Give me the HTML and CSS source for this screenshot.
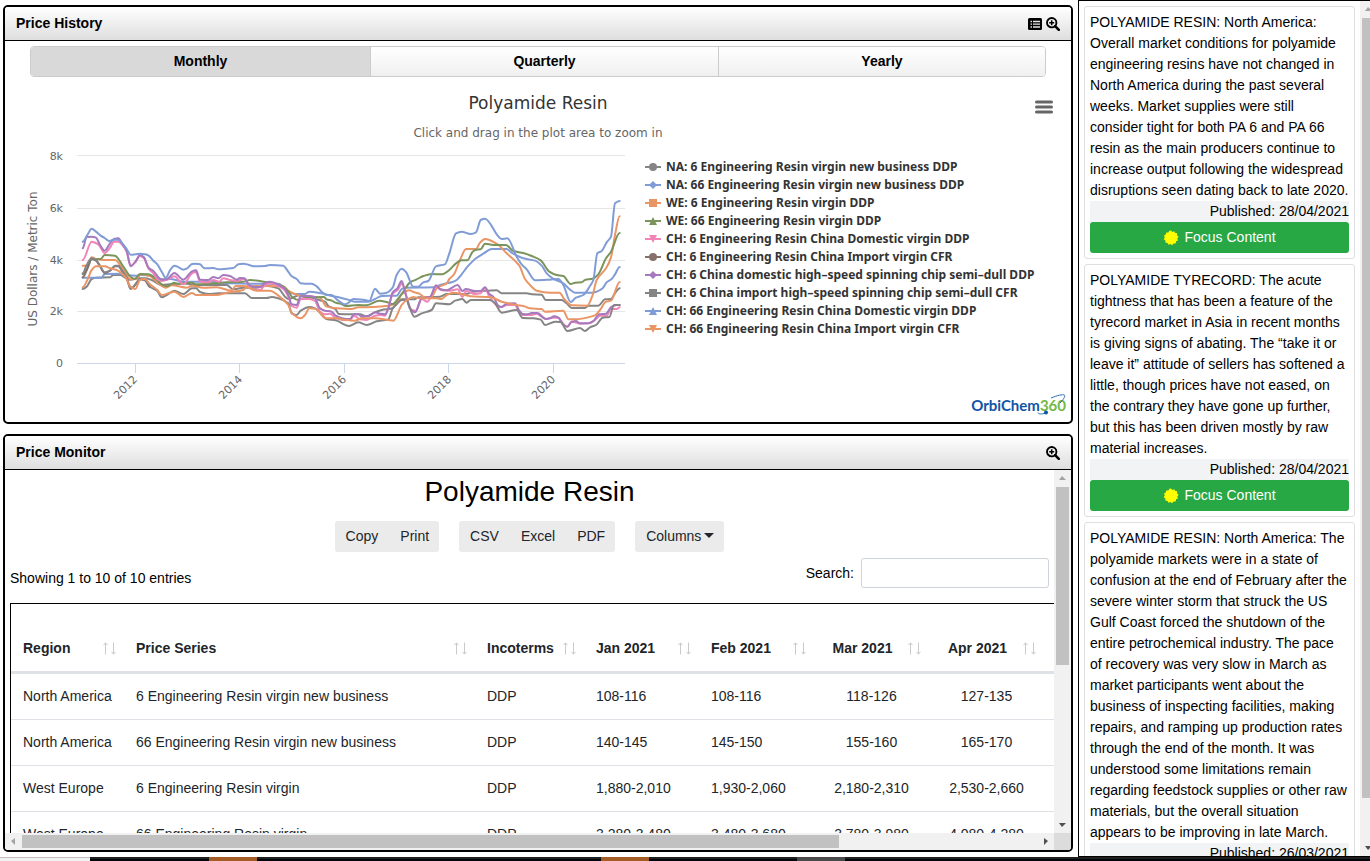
FILE: index.html
```html
<!DOCTYPE html>
<html lang="en">
<head>
<meta charset="utf-8">
<title>Polyamide Resin prices</title>
<link rel="stylesheet" href="styles.css">
</head>
<body>
<svg class="defs" aria-hidden="true">
  <symbol id="zoom-in" viewBox="0 0 14 14"><circle cx="5.7" cy="5.7" r="4.7" fill="none" stroke="#000" stroke-width="1.9"/><path d="M9.1 9.1 12.800 12.800" stroke="#000" stroke-width="2.6" stroke-linecap="round"/><path d="M3.2 5.7h5M5.7 3.2v5" stroke="#000" stroke-width="1.5"/></symbol>
  <symbol id="sort" viewBox="0 0 14 13"><path d="M2.5 12.5V1M.5 3.2 2.5.8l2 2.4M10.5.5V12M8.5 9.8l2 2.4 2-2.4" fill="none" stroke="#c9cacb" stroke-width="1"/></symbol>
  <symbol id="sun" viewBox="-8 -8 16 16"><path fill="#ff0" d="M0-7.6 1.5-5.9 3.3-6.8 4.2-4.9 6.2-4.7 6.1-2.6 7.6-1.3 6.3.4 7 2.4 5.1 3.3 4.6 5.4 2.5 5.4 1.1 7.2-.5 5.9-2.5 6.8-3.5 4.9-5.6 4.5-5.6 2.4-7.3 1.2-6.2-.6-7-2.5-5.2-3.5-4.8-5.6-2.6-5.5-1.6-7.2z"/></symbol>
</svg>
<div class="workspace">
  <main class="panels">
    <section class="panel">
      <header class="panel-head">
        <h2>Price History</h2>
        <div class="panel-tools">
          <button class="icon-button" aria-label="List view"><svg width="14" height="12" viewBox="0 0 14 12"><rect width="14" height="12" rx="1.5"/><path d="M2.5 3.5h1.500M5 3.500h7M2.500 6.200h1.500M5 6.200h7M2.500 9h1.500M5 9h7" stroke="#e6e6e6" stroke-width="1.300"/></svg></button>
          <button class="icon-button" aria-label="Zoom chart"><svg width="14" height="14"><use href="#zoom-in"/></svg></button>
        </div>
      </header>
      <div class="periods">
        <button class="period active">Monthly</button>
        <button class="period">Quarterly</button>
        <button class="period">Yearly</button>
      </div>
      <div class="chart">
        <button class="icon-button chart-menu" aria-label="Chart menu"><svg width="18" height="14" viewBox="0 0 18 14"><path d="M1.500 2h15M1.500 7h15M1.500 12h15" stroke="#666" stroke-width="3" stroke-linecap="round"/></svg></button>
        <h3 class="chart-title">Polyamide Resin</h3>
        <p class="chart-subtitle">Click and drag in the plot area to zoom in</p>
        <div class="chart-body">
          <svg class="plot" viewBox="0 0 620 271">
            <path class="grid" d="M57 10.500H605M57 63.500H605M57 115.500H605M57 166.500H605"/>
            <path class="axis" d="M57 218.500H605M115.500 218v10M219.500 218v10M324.500 218v10M428.500 218v10M533.500 218v10"/>
            <g class="tick" text-anchor="end">
              <text x="43" y="15">8k</text><text x="43" y="67">6k</text><text x="43" y="119">4k</text><text x="43" y="170">2k</text><text x="43" y="222">0</text>
              <text transform="translate(118 235) rotate(-45)">2012</text>
              <text transform="translate(223 235) rotate(-45)">2014</text>
              <text transform="translate(327 235) rotate(-45)">2016</text>
              <text transform="translate(432 235) rotate(-45)">2018</text>
              <text transform="translate(536 235) rotate(-45)">2020</text>
            </g>
            <text class="axis-title" text-anchor="middle" transform="translate(17 114) rotate(-90)">US Dollars / Metric Ton</text>
            <g id="series" transform="translate(50 0) scale(.33333)"></g>
          </svg>
          <div class="chart-side">
            <ul class="legend" id="legend"></ul>
            <div class="logo"><span>OrbiChem</span><span class="logo-num">360</span>
              <svg class="logo-orbit" width="34" height="22" viewBox="0 0 34 22"><path d="M19 4C25 1.500 31 0 32.500 1.200 33.500 2.500 31 6 28 9M6 18.500c0 2 5 2 9-.2" fill="none" stroke="#2a6db0"/><circle cx="14" cy="18.500" r="2" fill="#1054a5"/></svg>
            </div>
          </div>
        </div>
      </div>
    </section>

    <section class="panel monitor">
      <header class="panel-head">
        <h2>Price Monitor</h2>
        <div class="panel-tools"><button class="icon-button" aria-label="Zoom table"><svg width="14" height="14"><use href="#zoom-in"/></svg></button></div>
      </header>
      <div class="scroller">
        <div class="view">
          <h1 class="table-title">Polyamide Resin</h1>
          <div class="toolbar">
            <div class="group"><button>Copy</button><button>Print</button></div>
            <div class="group"><button>CSV</button><button>Excel</button><button>PDF</button></div>
            <div class="group"><button>Columns<i class="caret"></i></button></div>
          </div>
          <div class="filter">
            <span class="info">Showing 1 to 10 of 10 entries</span>
            <label class="search">Search: <input type="search"></label>
          </div>
          <table class="prices">
            <colgroup><col class="w-region"><col class="w-series"><col class="w-terms"><col class="w-month"><col class="w-month"><col class="w-month"><col class="w-month"><col></colgroup>
            <thead><tr>
              <th>Region<svg class="sort"><use href="#sort"/></svg></th>
              <th>Price Series<svg class="sort"><use href="#sort"/></svg></th>
              <th>Incoterms<svg class="sort"><use href="#sort"/></svg></th>
              <th>Jan 2021<svg class="sort"><use href="#sort"/></svg></th>
              <th>Feb 2021<svg class="sort"><use href="#sort"/></svg></th>
              <th class="mid">Mar 2021<svg class="sort"><use href="#sort"/></svg></th>
              <th class="mid">Apr 2021<svg class="sort"><use href="#sort"/></svg></th>
              <th></th>
            </tr></thead>
            <tbody>
              <tr><td>North America</td><td>6 Engineering Resin virgin new business</td><td>DDP</td><td>108-116</td><td>108-116</td><td class="mid">118-126</td><td class="mid">127-135</td><td></td></tr>
              <tr><td>North America</td><td>66 Engineering Resin virgin new business</td><td>DDP</td><td>140-145</td><td>145-150</td><td class="mid">155-160</td><td class="mid">165-170</td><td></td></tr>
              <tr><td>West Europe</td><td>6 Engineering Resin virgin</td><td>DDP</td><td>1,880-2,010</td><td>1,930-2,060</td><td class="mid">2,180-2,310</td><td class="mid">2,530-2,660</td><td></td></tr>
              <tr><td>West Europe</td><td>66 Engineering Resin virgin</td><td>DDP</td><td>3,280-3,480</td><td>3,480-3,680</td><td class="mid">3,780-3,980</td><td class="mid">4,080-4,280</td><td></td></tr>
            </tbody>
          </table>
        </div>
        <div class="bar-v"><i class="arrow up"></i><div class="track-v"><div class="thumb thumb-rows"></div></div><i class="arrow down"></i></div>
        <div class="bar-h"><i class="arrow left"></i><div class="track-h"><div class="thumb thumb-cols"></div></div><i class="arrow right"></i></div>
        <div class="corner"></div>
      </div>
    </section>
  </main>

  <aside class="news">
    <div class="cards">
      <article class="card">
        <p>POLYAMIDE RESIN: North America: Overall market conditions for polyamide engineering resins have not changed in North America during the past several weeks. Market supplies were still consider tight for both PA 6 and PA 66 resin as the main producers continue to increase output following the widespread disruptions seen dating back to late 2020.</p>
        <div class="published">Published: 28/04/2021</div>
        <button class="focus"><svg width="16" height="16"><use href="#sun"/></svg>Focus Content</button>
      </article>
      <article class="card">
        <p>POLYAMIDE TYRECORD: The acute tightness that has been a feature of the tyrecord market in Asia in recent months is giving signs of abating. The “take it or leave it” attitude of sellers has softened a little, though prices have not eased, on the contrary they have gone up further, but this has been driven mostly by raw material increases.</p>
        <div class="published">Published: 28/04/2021</div>
        <button class="focus"><svg width="16" height="16"><use href="#sun"/></svg>Focus Content</button>
      </article>
      <article class="card">
        <p>POLYAMIDE RESIN: North America: The polyamide markets were in a state of confusion at the end of February after the severe winter storm that struck the US Gulf Coast forced the shutdown of the entire petrochemical industry. The pace of recovery was very slow in March as market participants went about the business of inspecting facilities, making repairs, and ramping up production rates through the end of the month. It was understood some limitations remain regarding feedstock supplies or other raw materials, but the overall situation appears to be improving in late March.</p>
        <div class="published">Published: 26/03/2021</div>
        <button class="focus"><svg width="16" height="16"><use href="#sun"/></svg>Focus Content</button>
      </article>
    </div>
    <div class="bar-v"><i class="arrow up"></i><div class="track-v"><div class="thumb thumb-news"></div></div><i class="arrow down"></i></div>
  </aside>
</div>
<footer class="taskbar"><i class="start"></i><i class="task first"></i><i class="task second"></i><i class="task muted"></i></footer>
<script src="chart.js"></script>
</body>
</html>
```
FILE: styles.css
```css
* { box-sizing: border-box; }
html, body { height: 100%; margin: 0; }
body {
  display: flex;
  flex-direction: column;
  overflow: hidden;
  background: #fff;
  color: #000;
  font: 14px/21px "Liberation Sans", Arial, sans-serif;
}
h1, h2, h3, p, ul { margin: 0; padding: 0; font-weight: normal; }
button { font: inherit; color: inherit; border: 0; background: none; padding: 0; }
svg { display: block; }
.defs { position: absolute; width: 0; height: 0; }

.workspace { flex: 1; min-height: 0; display: grid; grid-template-columns: minmax(0, 1fr) 292px; }
.panels { display: flex; flex-direction: column; gap: 10px; min-height: 0; padding: 5px 5px 5px 3px; }
.panel { border: 2px solid #000; border-radius: 5px; overflow: hidden; }
.panel-head {
  display: flex;
  justify-content: space-between;
  align-items: center;
  height: 34px;
  padding: 0 11px;
  border-bottom: 1px solid #000;
  background: linear-gradient(#fff, #dedede);
}
.panel-head h2 { font-size: 14px; font-weight: bold; }
.panel-tools { display: flex; align-items: center; gap: 4px; }

.periods {
  display: grid;
  grid-template-columns: 339fr 348fr 327fr;
  margin: 5px 25px 0;
  border: 1px solid #ccc;
  border-radius: 4px;
  overflow: hidden;
}
.period { height: 29px; font-weight: bold; background: linear-gradient(#fff, #f0f0f0); border-left: 1px solid #ccc; }
.period:first-child { border-left: 0; }
.period.active { background: #d9d9d9; }

.chart { position: relative; padding: 14px 5px 6px 15px; font-family: "DejaVu Sans", sans-serif; }
.chart-menu { position: absolute; top: 23px; right: 18px; }
.chart-title, .chart-subtitle { padding-right: 10px; text-align: center; }
.chart-title { font-size: 17px; line-height: 24px; color: #333; }
.chart-subtitle { margin-top: 8px; font-size: 12px; line-height: 20px; color: #666; }
.chart-body { display: grid; grid-template-columns: 620fr 421fr; gap: 5px; margin-top: 2px; }
.plot { width: 100%; }
.grid { stroke: #e6e6e6; fill: none; }
.axis { stroke: #ccd6eb; fill: none; }
.tick { font-size: 11px; fill: #666; }
.axis-title { font-size: 12px; fill: #666; }
.line { fill: none; stroke-width: 6; stroke-linejoin: round; stroke-linecap: round; }
.chart-side { display: flex; flex-direction: column; justify-content: space-between; padding-top: 13px; }
.legend { list-style: none; font: bold 12px/18px "Noto Sans", sans-serif; color: #333; white-space: nowrap; }
.legend li { display: flex; align-items: center; gap: 5px; }
.logo { position: relative; align-self: flex-end; font: bold 15px/22px Lato, sans-serif; color: #1054a5; }
.logo-num { color: #74b843; }
.logo-orbit { position: absolute; right: 0; top: 0; }

.monitor { flex: 1; min-height: 0; display: flex; flex-direction: column; }
.monitor .panel-head { flex: none; }
.scroller { flex: 1; min-height: 0; display: grid; grid-template: minmax(0, 1fr) 17px / minmax(0, 1fr) 17px; }
.view { overflow: hidden; padding: 5px 0 0 5px; }
.table-title { margin-right: 5px; text-align: center; font-size: 28px; line-height: 34px; }
.toolbar { display: flex; justify-content: center; gap: 20px; margin: 12px 5px 0 0; }
.group { display: flex; border-radius: 3px; background: #ebebeb; color: #212529; }
.group button { height: 31px; padding: 0 11px; }
.group button:last-child { padding-right: 10px; }
.caret { display: inline-block; margin-left: 3px; border: 5px solid transparent; border-top-color: #212529; border-bottom: 0; vertical-align: 3px; }
.filter { display: flex; justify-content: space-between; margin: 5px 5px 14px 0; }
.info { padding-top: 11px; }
.search { display: flex; align-items: center; gap: 7px; }
.search input { width: 188px; height: 30px; border: 1px solid #ced4da; border-radius: 3px; }

.prices { table-layout: fixed; width: 100%; border-collapse: separate; border-spacing: 0; border: solid #000; border-width: 1px 0 0 1px; color: #212529; }
.w-region { width: 113px; }
.w-series { width: 351px; }
.w-terms { width: 109px; }
.w-month { width: 115px; }
.prices th { position: relative; height: 70px; padding: 21px 30px 0 12px; text-align: left; border-bottom: 3px solid #dee2e6; white-space: nowrap; }
.prices td { height: 46px; padding: 0 12px; border-bottom: 1px solid #dee2e6; white-space: nowrap; }
.prices th:last-child, .prices td:last-child { padding: 0; }
.prices th.mid, .prices td.mid { text-align: center; }
.sort { position: absolute; right: 7px; bottom: 16px; width: 14px; height: 13px; }

.bar-v, .bar-h { display: flex; background: #f1f1f1; }
.bar-v { flex-direction: column; }
.track-v, .track-h { flex: 1; min-width: 0; min-height: 0; }
.track-v { padding: 0 2px; }
.track-h { padding: 2px 0; }
.thumb { background: #c1c1c1; }
.thumb-rows { height: 54%; }
.thumb-news { height: 95%; }
.thumb-cols { width: 80.5%; height: 100%; }
.corner { background: #dcdcdc; }
.arrow { flex: none; width: 17px; height: 17px; background: #505050; }
.up { clip-path: polygon(8px 6px, 12px 10px, 5px 10px); background: #a3a3a3; }
.down { clip-path: polygon(5px 7px, 12px 7px, 8px 11px); }
.left { clip-path: polygon(10px 5px, 10px 12px, 6px 8px); background: #a3a3a3; }
.right { clip-path: polygon(7px 5px, 7px 12px, 11px 8px); }

.news { display: flex; justify-content: space-between; min-height: 0; border: solid #000; border-width: 1px 0 1px 1px; overflow: hidden; }
.news .bar-v { flex: none; width: 10px; overflow: hidden; }
.news .track-v { padding-right: 0; }
.cards { flex: none; display: flex; flex-direction: column; gap: 5px; width: 281px; padding: 5px; overflow: hidden; }
.card { flex: none; padding: 5px; border: 1px solid #dfdfdf; border-radius: 3px; }
.published { text-align: right; background: #f1f3f5; }
.focus { display: flex; justify-content: center; align-items: center; gap: 5px; width: 100%; height: 31px; border-radius: 3px; background: #28a745; color: #fff; }

.taskbar { display: grid; grid-template-columns: 90fr 119fr 48fr 344fr 48fr 148fr 48fr 525fr; height: 4px; background: linear-gradient(#1c211d 50%, #03040c 50%); }
.start { grid-column: 1; background: #f2f2f2; border-top: 1px solid #c0c0c0; }
.task { background: #a55d25; }
.first { grid-column: 3; }
.second { grid-column: 5; }
.muted { grid-column: 7; background: #4a4a4a; }
```
FILE: chart.js
```js
const BLUE = '#809cd6', GRAY = '#858585', ORANGE = '#ea9565', GREEN = '#7a945c',
  PINK = '#f285b8', BROWN = '#85706a', PURPLE = '#a479bd';

const series = [
  { name: 'NA: 6 Engineering Resin virgin new business DDP', color: GRAY, mark: 'circle', data: '38,432 50,425 65,402 78,398 120,397 130,390 152,390 165,398 182,404 200,400 225,400 245,405 275,420 300,418 340,415 378,420 470,420 490,433 520,428 560,428 590,422 625,430 645,455 655,462 690,450 750,466 765,470 775,483 797,493 806,507 840,508 870,508 890,514 915,502 935,495 968,490 980,472 995,463 1032,463 1045,457 1110,455 1130,447 1188,447 1210,440 1248,437 1280,436 1295,445 1370,445 1385,448 1415,449 1427,465 1475,465 1490,475 1505,489 1545,489 1555,482 1585,482 1605,463 1623,462 1635,445 1649,430' },
  { name: 'NA: 66 Engineering Resin virgin new business DDP', color: BLUE, mark: 'diamond', data: '38,398 95,398 104,387 150,386 165,390 200,392 212,390 245,392 275,403 300,402 340,410 430,410 470,415 545,416 625,416 640,425 660,443 675,447 705,447 718,440 755,445 785,453 812,458 840,466 854,470 895,470 915,462 935,453 980,452 995,432 1005,428 1095,427 1110,420 1125,416 1145,412 1160,405 1175,388 1190,368 1218,340 1240,326 1265,312 1310,312 1325,323 1360,340 1395,347 1415,362 1430,385 1448,400 1480,415 1500,434 1515,443 1565,443 1580,440 1598,430 1610,412 1625,402 1635,388 1649,366' },
  { name: 'WE: 6 Engineering Resin virgin DDP', color: ORANGE, mark: 'square', data: '38,362 52,362 65,337 78,342 104,345 135,345 160,375 182,403 200,402 212,388 240,393 262,412 288,428 305,421 352,428 366,422 400,428 440,427 485,437 497,423 640,424 655,437 690,452 750,458 770,485 800,490 845,492 865,487 910,486 955,482 980,472 995,448 1018,436 1030,441 1048,446 1065,457 1085,455 1102,427 1115,422 1130,415 1138,402 1152,388 1170,345 1188,312 1218,312 1230,293 1245,282 1280,296 1310,325 1348,362 1365,402 1385,425 1400,437 1440,443 1468,443 1485,465 1505,481 1552,482 1568,450 1580,405 1608,370 1623,337 1635,270 1649,214' },
  { name: 'WE: 66 Engineering Resin virgin DDP', color: GREEN, mark: 'up', data: '38,388 52,370 65,343 92,342 104,330 135,332 160,365 182,395 195,402 210,387 235,388 260,404 275,418 290,424 313,413 325,417 366,413 378,418 430,415 470,412 520,410 540,405 590,412 640,425 655,440 668,458 685,465 700,460 762,456 770,463 785,467 800,474 812,476 828,483 865,480 890,481 928,467 952,472 968,477 985,460 1000,440 1020,412 1040,403 1060,393 1085,387 1115,388 1138,375 1158,355 1175,346 1192,346 1208,320 1218,314 1232,313 1245,296 1270,300 1308,300 1330,318 1360,324 1385,333 1412,346 1438,380 1460,390 1480,393 1502,417 1515,413 1535,412 1545,405 1568,401 1585,388 1608,340 1623,320 1649,264' },
  { name: 'CH: 6 Engineering Resin China Domestic virgin DDP', color: PINK, mark: 'down', data: '38,345 65,290 85,298 104,324 120,308 132,290 145,290 157,300 170,320 182,362 196,352 210,333 222,340 235,370 250,385 262,403 275,408 290,405 313,394 340,418 366,385 378,381 390,411 415,412 430,405 448,410 460,400 480,405 500,408 523,402 537,420 550,434 572,434 585,420 600,415 640,432 655,455 665,483 680,488 692,462 718,462 735,468 750,500 765,508 780,506 797,518 820,525 840,525 852,512 870,523 890,525 915,512 930,510 945,512 968,447 985,432 995,415 1008,450 1025,495 1038,497 1055,462 1072,470 1085,450 1098,425 1115,436 1140,437 1163,433 1177,456 1188,438 1215,447 1232,445 1245,430 1258,455 1290,487 1312,480 1335,480 1345,495 1358,510 1385,510 1400,506 1415,515 1430,522 1445,518 1465,518 1480,537 1492,545 1505,530 1530,536 1558,535 1575,525 1590,512 1610,512 1623,492 1640,492 1649,487' },
  { name: 'CH: 6 Engineering Resin China Import virgin CFR', color: BROWN, mark: 'circle', data: '38,397 50,376 65,341 78,347 90,364 104,384 120,377 135,364 145,364 157,380 170,400 182,431 195,420 210,403 225,406 240,426' },
  { name: 'CH: 6 China domestic high-speed spinning chip semi-dull DDP', color: PURPLE, mark: 'diamond', data: '38,310 50,276 65,275 78,278 90,300 104,317 120,295 132,282 145,280 157,297 170,318 182,364 196,350 210,330 222,337 235,367 250,378 275,404 290,403 313,384 340,404 366,379 378,376 390,404 415,405 430,396 445,400 460,390 480,393 500,404 510,399 523,400 537,420 550,425 572,426 585,414 600,410 640,428 655,450 665,478 680,480 692,454 718,453 733,456 750,490 765,497 785,500 797,512 830,522 840,522 852,508 865,508 875,515 895,513 915,502 930,506 945,508 955,490 968,442 982,430 995,408 1005,440 1020,490 1035,502 1055,460 1080,456 1098,421 1110,432 1130,436 1163,420 1177,438 1188,432 1215,438 1232,438 1245,427 1258,447 1270,455 1285,482 1295,486 1310,476 1335,475 1345,492 1358,507 1372,508 1385,504 1402,504 1427,522 1440,520 1452,514 1465,518 1480,540 1492,545 1505,530 1518,528 1530,535 1555,535 1570,528 1588,508 1608,506 1625,485 1640,480 1649,480' },
  { name: 'CH: 6 China import high-speed spinning chip semi-dull CFR', color: GRAY, mark: 'square', data: '38,385 50,360 65,340 78,345 90,362 104,382 120,377 135,362 145,362 157,378 170,398 182,432 195,420 210,402 225,405 240,425 262,438 275,457 290,450 313,437 340,447 366,430 378,430 390,441 415,447 445,445 525,445 545,459 590,459 605,456 625,460 655,475 665,505 680,510 692,497 718,486 735,490 770,522 797,526 837,543 865,532 890,540 920,529 955,523 968,490 980,478 995,465 1010,465 1020,490 1033,515 1055,505 1085,495 1098,475 1138,478 1155,467 1177,462 1190,473 1202,465 1260,465 1275,475 1295,503 1340,495 1358,519 1390,520 1412,524 1425,540 1455,530 1472,531 1492,558 1530,549 1545,558 1560,547 1578,540 1598,518 1618,516 1632,480 1649,480' },
  { name: 'CH: 66 Engineering Resin China Domestic virgin DDP', color: BLUE, mark: 'up', data: '38,290 52,270 65,251 78,260 92,272 104,279 117,288 130,284 145,284 157,295 170,312 182,329 196,328 212,326 226,328 236,332 250,347 262,358 275,380 288,398 300,376 313,362 326,367 340,374 352,370 366,357 378,356 390,358 404,370 430,369 445,373 470,371 490,369 505,358 520,356 535,359 550,364 585,363 600,360 640,362 652,376 665,394 680,402 692,415 705,416 725,416 740,424 755,440 770,450 785,450 800,463 825,478 837,472 850,462 880,464 898,468 915,431 930,446 948,444 968,428 980,390 995,371 1008,381 1030,425 1045,425 1060,412 1075,408 1098,364 1125,358 1138,325 1158,265 1175,260 1202,267 1218,262 1232,225 1245,221 1295,282 1312,280 1340,335 1355,358 1370,373 1396,406 1440,404 1465,402 1480,420 1502,471 1518,458 1540,450 1560,423 1570,405 1582,325 1595,318 1610,292 1623,275 1635,175 1649,168' },
  { name: 'CH: 66 Engineering Resin China Import virgin CFR', color: ORANGE, mark: 'down', data: '38,427 52,405 65,375 78,364 104,364 120,370 140,375 165,395 182,425 196,432 210,405 225,402 240,418 262,435 275,450 313,440 340,456 366,444 378,450 440,450 470,443 520,435 530,427 560,437 600,437 625,452 655,480 665,503 692,520 705,510 718,490 735,491 770,520 800,520 820,524 855,527 875,520 915,520 955,525 970,527 995,480 1010,465 1030,456 1048,460 1098,460 1115,462 1130,450 1150,443 1185,450 1202,454 1260,456 1295,470 1340,480 1360,483 1380,490 1415,492 1425,500 1480,497 1495,523 1512,523 1575,511 1590,495 1608,470 1623,467 1649,411' }
];

const marks = {
  circle: '<circle cx="8" cy="6" r="4"/>',
  diamond: '<path d="M8 2l4 4-4 4-4-4z"/>',
  square: '<path d="M4 2h8v8H4z"/>',
  up: '<path d="M8 2l4 8H4z"/>',
  down: '<path d="M4 2h8l-4 8z"/>'
};

// Horizontal tangents at local extremes keep the curve from overshooting.
function smooth(text) {
  const p = text.split(' ').map(s => s.split(',').map(Number));
  const slope = p.map((c, i) => {
    if (!i || i === p.length - 1) return 0;
    const a = (c[1] - p[i - 1][1]) / (c[0] - p[i - 1][0]);
    const b = (p[i + 1][1] - c[1]) / (p[i + 1][0] - c[0]);
    return a * b <= 0 ? 0 : 2 * a * b / (a + b);
  });
  let d = 'M' + p[0];
  for (let i = 1; i < p.length; i++) {
    const h = (p[i][0] - p[i - 1][0]) / 3;
    d += `C${p[i - 1][0] + h},${p[i - 1][1] + slope[i - 1] * h} ${p[i][0] - h},${p[i][1] - slope[i] * h} ${p[i]}`;
  }
  return d;
}

document.getElementById('series').innerHTML = series
  .map(s => `<path class="line" stroke="${s.color}" d="${smooth(s.data)}"/>`).join('');
document.getElementById('legend').innerHTML = series
  .map(s => `<li><svg width="16" height="12" fill="${s.color}"><path d="M0 5h16v2H0z"/>${marks[s.mark]}</svg><span>${s.name.replace(/([a-z])-([a-z])/g, '$1–$2')}</span></li>`).join('');
```
